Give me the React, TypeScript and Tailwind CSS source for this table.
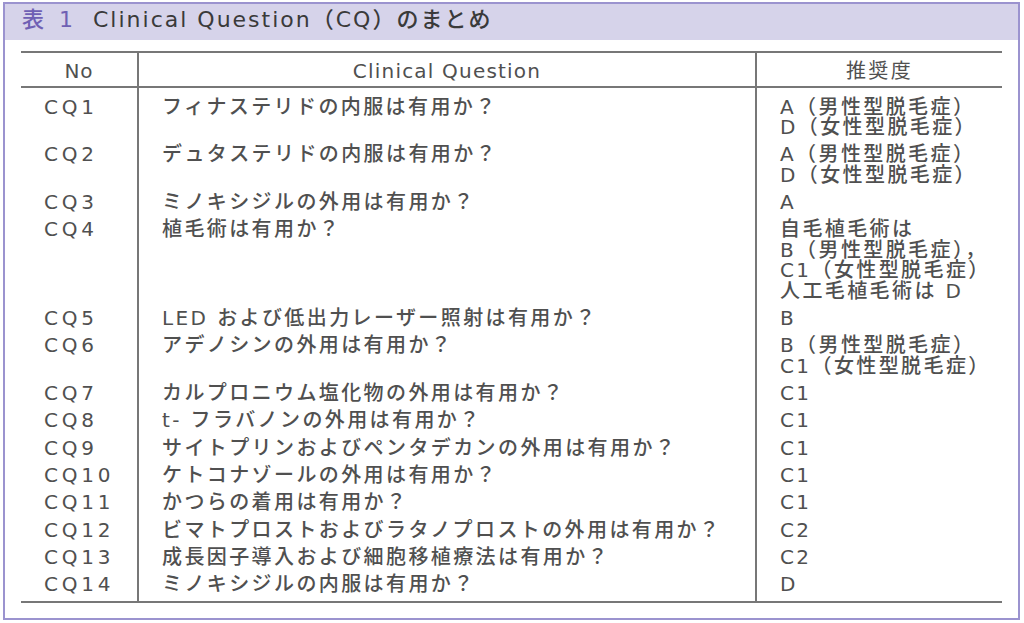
const FONT = { fontFamily: '"DejaVu Sans", "Noto Sans CJK JP", sans-serif' };

const ROWS: [string, string, string[]][] = [
  ["CQ1", "フィナステリドの内服は有用か？", ["A（男性型脱毛症）", "D（女性型脱毛症）"]],
  ["CQ2", "デュタステリドの内服は有用か？", ["A（男性型脱毛症）", "D（女性型脱毛症）"]],
  ["CQ3", "ミノキシジルの外用は有用か？", ["A"]],
  ["CQ4", "植毛術は有用か？", ["自毛植毛術は", "B（男性型脱毛症），", "C1（女性型脱毛症）", "人工毛植毛術は D"]],
  ["CQ5", "LED および低出力レーザー照射は有用か？", ["B"]],
  ["CQ6", "アデノシンの外用は有用か？", ["B（男性型脱毛症）", "C1（女性型脱毛症）"]],
  ["CQ7", "カルプロニウム塩化物の外用は有用か？", ["C1"]],
  ["CQ8", "t- フラバノンの外用は有用か？", ["C1"]],
  ["CQ9", "サイトプリンおよびペンタデカンの外用は有用か？", ["C1"]],
  ["CQ10", "ケトコナゾールの外用は有用か？", ["C1"]],
  ["CQ11", "かつらの着用は有用か？", ["C1"]],
  ["CQ12", "ビマトプロストおよびラタノプロストの外用は有用か？", ["C2"]],
  ["CQ13", "成長因子導入および細胞移植療法は有用か？", ["C2"]],
  ["CQ14", "ミノキシジルの内服は有用か？", ["D"]],
];

export default function App() {
  return (
    <div className="w-[1024px] h-[623px] bg-white overflow-hidden" style={FONT}>
      <div className="ml-[3px] mt-[2px] w-[1017px] h-[618px] border-2 border-[#9b93cf]">
        <div className="h-[36px] bg-[#d6d3ea] flex items-center pl-[17px] pb-[4px] text-[22px] leading-none font-medium">
          <span className="text-[#6f60b4] tracking-[4px]">表 1</span>
          <span className="ml-[16px] text-[#3a3a3a] tracking-[2px]">Clinical Question（CQ）のまとめ</span>
        </div>

        <table className="ml-[16px] mt-[11px] w-[981px] border-collapse text-[20px] text-[#505050] tracking-[2.4px] font-medium">
          <colgroup>
            <col className="w-[117px]" />
            <col className="w-[618px]" />
            <col className="w-[246px]" />
          </colgroup>
          <thead>
            <tr className="border-y-2 border-[#777]">
              <th className="h-[35px] pt-[3px] font-normal text-center tracking-[1px]">No</th>
              <th className="pt-[3px] font-normal text-center border-l-2 border-[#777] tracking-[1.2px]">Clinical Question</th>
              <th className="pt-[3px] font-normal text-center border-l-2 border-[#777]">推奨度</th>
            </tr>
          </thead>
          <tbody className="border-b-2 border-[#777]">
            {ROWS.map(([no, q, grade], i) => {
              const pad = i === 0 ? "pt-[8.5px] pb-[3.4px]" : i === ROWS.length - 1 ? "pt-[3.4px] pb-[6.5px]" : "py-[3.4px]";
              return (
                <tr key={no} className="align-top leading-[20.5px]">
                  <td className={`${pad} pl-[23px] tracking-[3.8px]`}>{no}</td>
                  <td className={`${pad} pl-[23px] border-l-2 border-[#777]`}>{q}</td>
                  <td className={`${pad} pl-[23px] border-l-2 border-[#777]`}>
                    {grade.map((g) => (
                      <div key={g}>{g}</div>
                    ))}
                  </td>
                </tr>
              );
            })}
          </tbody>
        </table>
      </div>
    </div>
  );
}
